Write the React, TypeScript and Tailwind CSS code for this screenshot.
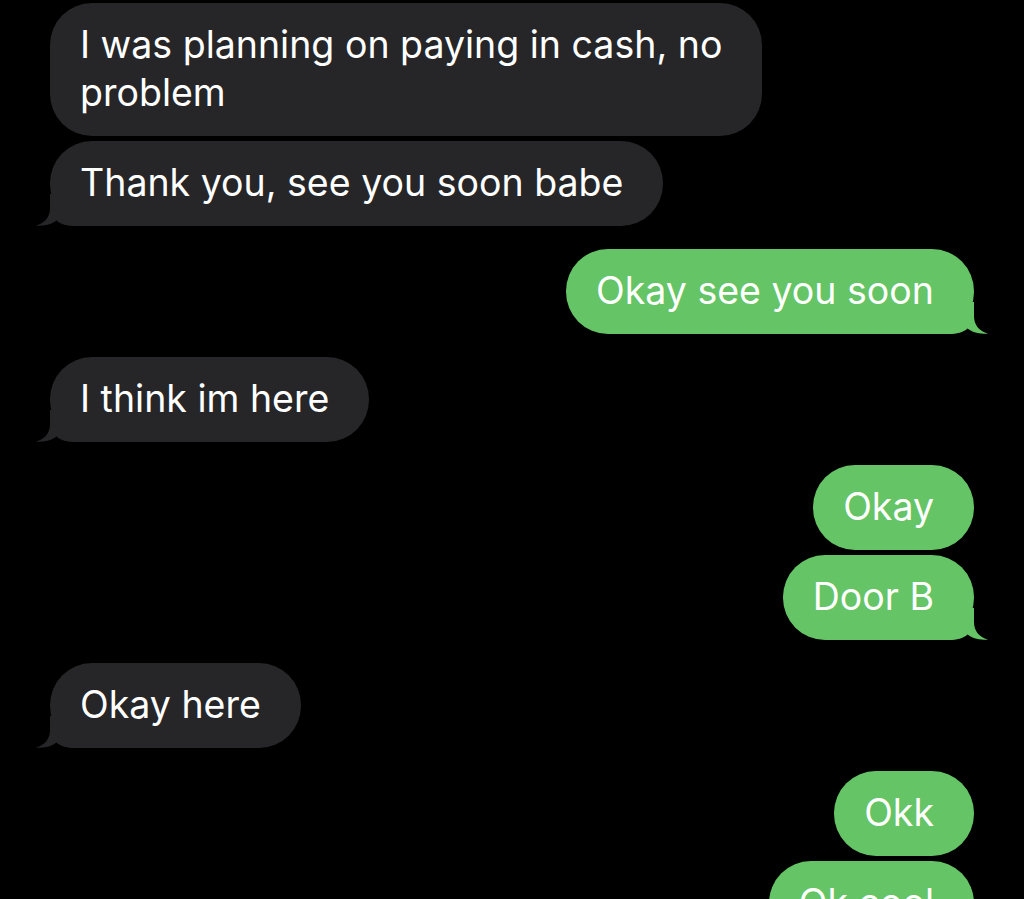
import React from "react";

type Msg = { text: string; me: boolean; tail: boolean; gap: "group" | "tight" };

const messages: Msg[] = [
	{ text: "I was planning on paying in cash, no\nproblem", me: false, tail: false, gap: "group" },
	{ text: "Thank you, see you soon babe", me: false, tail: true, gap: "tight" },
	{ text: "Okay see you soon", me: true, tail: true, gap: "group" },
	{ text: "I think im here", me: false, tail: true, gap: "group" },
	{ text: "Okay", me: true, tail: false, gap: "group" },
	{ text: "Door B", me: true, tail: true, gap: "tight" },
	{ text: "Okay here", me: false, tail: true, gap: "group" },
	{ text: "Okk", me: true, tail: false, gap: "group" },
	{ text: "Ok cool", me: true, tail: true, gap: "tight" },
];

const Tail = ({ me }: { me: boolean }) => (
	<svg
		width="60"
		height="32"
		viewBox="0 0 60 32"
		className={
			me
				? "absolute -right-[14px] bottom-0 -scale-x-100"
				: "absolute -left-[14px] bottom-0"
		}
	>
		<path
			d="M14 0 V14 C14 23 9 29 0 31.5 C9 32.5 16 30 20.5 26.5 C25 30.5 31 32 39 32 H60 V0 Z"
			fill={me ? "#65c466" : "#262629"}
		/>
	</svg>
);

const Bubble = ({ msg }: { msg: Msg }) => (
	<div
		className={`flex ${msg.me ? "justify-end" : "justify-start"} ${
			msg.gap === "tight" ? "mt-[5px]" : "mt-[23px]"
		} first:mt-0`}
	>
		<div
			className={`relative whitespace-pre-line rounded-[42px] pt-[18px] pb-[19px] pl-[30px] pr-[40px] text-[37.5px] leading-[48px] text-white ${
				msg.me ? "bg-[#65c466]" : "bg-[#262629]"
			}`}
		>
			{msg.tail && <Tail me={msg.me} />}
			<span className="relative">{msg.text}</span>
		</div>
	</div>
);

export default function App() {
	return (
		<div
			className="h-[899px] w-[1024px] overflow-hidden bg-black pt-[3px] pl-[50px] pr-[50px]"
			style={{ fontFamily: "Inter, 'Liberation Sans', sans-serif" }}
		>
			<div className="flex flex-col">
				{messages.map((m, i) => (
					<Bubble key={i} msg={m} />
				))}
			</div>
		</div>
	);
}
